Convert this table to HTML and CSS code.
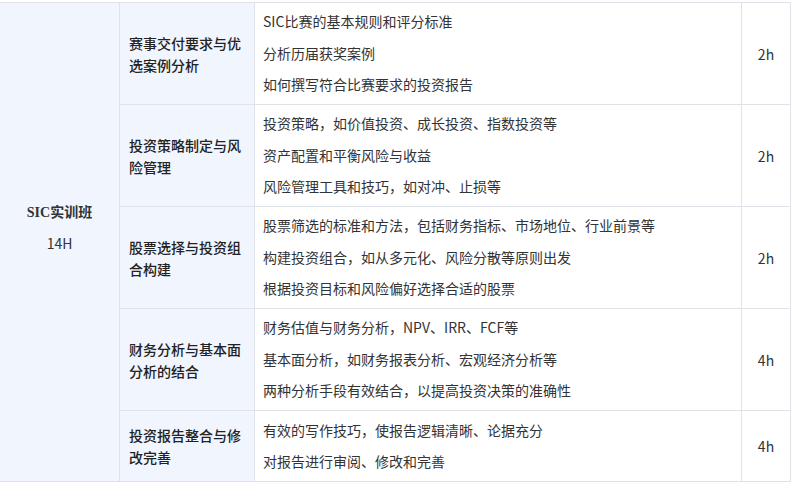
FILE: index.html
```html
<!DOCTYPE html>
<html lang="zh-CN">
<head>
    <meta charset="UTF-8">
    <title>SIC实训班</title>
    <link rel="stylesheet" href="styles.css">
</head>
<body>
    <table class="course">
        <colgroup>
            <col class="c-class">
            <col class="c-topic">
            <col class="c-items">
            <col class="c-hours">
        </colgroup>
        <tr>
            <td class="class-cell" rowspan="5">
                <div class="class-name">SIC实训班</div>
                <div class="class-hours">14H</div>
            </td>
            <td class="topic">赛事交付要求与优选案例分析</td>
            <td class="items">
                <div>SIC比赛的基本规则和评分标准</div>
                <div>分析历届获奖案例</div>
                <div>如何撰写符合比赛要求的投资报告</div>
            </td>
            <td class="hours">2h</td>
        </tr>
        <tr>
            <td class="topic">投资策略制定与风险管理</td>
            <td class="items">
                <div>投资策略，如价值投资、成长投资、指数投资等</div>
                <div>资产配置和平衡风险与收益</div>
                <div>风险管理工具和技巧，如对冲、止损等</div>
            </td>
            <td class="hours">2h</td>
        </tr>
        <tr>
            <td class="topic">股票选择与投资组合构建</td>
            <td class="items">
                <div>股票筛选的标准和方法，包括财务指标、市场地位、行业前景等</div>
                <div>构建投资组合，如从多元化、风险分散等原则出发</div>
                <div>根据投资目标和风险偏好选择合适的股票</div>
            </td>
            <td class="hours">2h</td>
        </tr>
        <tr>
            <td class="topic">财务分析与基本面分析的结合</td>
            <td class="items">
                <div>财务估值与财务分析，NPV、IRR、FCF等</div>
                <div>基本面分析，如财务报表分析、宏观经济分析等</div>
                <div>两种分析手段有效结合，以提高投资决策的准确性</div>
            </td>
            <td class="hours">4h</td>
        </tr>
        <tr class="last">
            <td class="topic">投资报告整合与修改完善</td>
            <td class="items">
                <div>有效的写作技巧，使报告逻辑清晰、论据充分</div>
                <div>对报告进行审阅、修改和完善</div>
            </td>
            <td class="hours">4h</td>
        </tr>
    </table>
</body>
</html>
```

FILE: styles.css
```css
body {
    margin: 0;
    padding-top: 2px;
    background: #fff;
    color: #333;
    font-family: "Noto Sans CJK SC", "Noto Sans", sans-serif;
    font-size: 14px;
}
.course {
    border-collapse: collapse;
    table-layout: fixed;
    width: 791px;
    margin-left: -1px;
}
.c-class { width: 120px; }
.c-topic { width: 135px; }
.c-items { width: 487px; }
.c-hours { width: 49px; }
.course td {
    border: 1px solid #dfe2e8;
    vertical-align: middle;
    height: 101px;
    padding: 0;
}
.course tr.last td { height: 70px; }
.class-cell,
.topic {
    background: #f1f5fd;
}
.class-cell {
    text-align: center;
    padding-bottom: 28px !important;
}
.class-name {
    font-family: "Liberation Serif", "Noto Sans CJK SC", serif;
    font-weight: bold;
    line-height: 30px;
}
.class-hours {
    line-height: 30px;
}
.topic {
    padding: 0 12px 0 9px !important;
    line-height: 22px;
    font-weight: 500;
    color: #222;
}
.items {
    padding: 0 8px !important;
    line-height: 31.5px;
    font-size: 14px;
}
.hours {
    text-align: center;
    font-size: 14px;
}
```
